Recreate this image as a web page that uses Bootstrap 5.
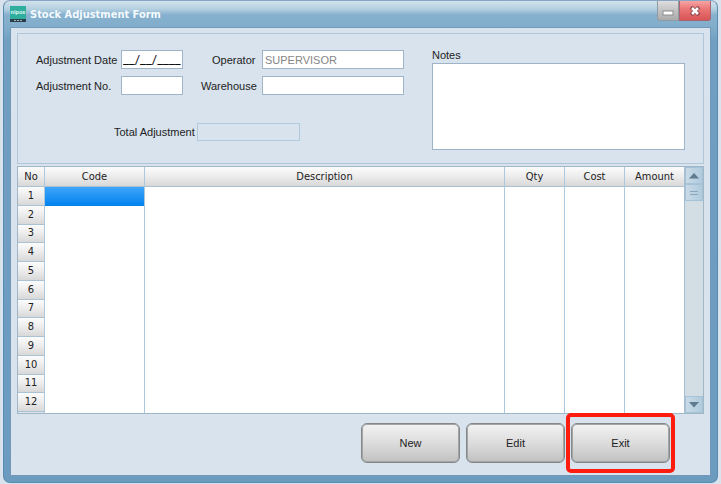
<!DOCTYPE html>
<html lang="en">
<head>
<meta charset="utf-8">
<meta name="viewport" content="width=device-width, initial-scale=1">
<title>Stock Adjustment Form</title>
<link href="https://cdn.jsdelivr.net/npm/bootstrap@5.3.0/dist/css/bootstrap.min.css" rel="stylesheet">
<style>
  body { background: #d8e3ed; color: #222; font-family: "Liberation Sans", sans-serif; font-size: 11px; line-height: 16px; }
  .page { padding: 0 3px 2px; }
  .app-window { border: 1px solid #5a8bb0; border-top-color: #88a5c3; border-radius: 7px; background: linear-gradient(#d3e2ed, #b4d0e1 8px, #86b0ce 14px, #82aecb 26px, #719fc2 40px, #6b9bbf); padding: 0 6px 6px; }
  .title-bar { height: 26px; }
  .title-bar h1 { font: bold 11px/20px "DejaVu Sans Condensed", "Noto Sans", sans-serif; color: #f4fafd; }
  .app-icon { width: 16px; height: 17px; }
  .win-btn { height: 20px; border: 1px solid #8e9ba5; border-top: 0; padding: 0; }
  .btn-min { width: 22px; background: linear-gradient(#dedede, #c5c5c5 45%, #ababab); border-radius: 0 0 0 3px; }
  .btn-close-win { width: 32px; background: linear-gradient(#f7a4a4, #ea7373 45%, #d95556); border-color: #a96572; border-radius: 0 0 3px 0; }
  .work-area { background: #d8e3ed; border: 1px solid #7398b9; padding: 5px 6px 12px; }
  .form-panel { border: 1px solid #afc7d8; padding: 11px 18px 13px; margin-bottom: 2px; gap: 28px; }
  .form-panel label { white-space: nowrap; }
  .field-grid { display: grid; grid-template-columns: 85px 62px 79px 142px; row-gap: 7px; align-items: center; margin-top: 5px; }
  .field-grid .right-label { padding-left: 18px; }
  .field-grid .operator-label { padding-left: 29px; }
  .field { height: 19px; border: 1px solid #9fb5c7; border-radius: 0; background: #fff; padding: 0 2px; width: 100%; color: #111; font-size: 11px; line-height: 16px; }
  .field:disabled { color: #858585; opacity: 1; }
  #adj-date { font-family: Roboto, sans-serif; font-size: 13px; padding: 0 1px; }
  .total-row { margin-top: 28px; }
  .total-row label { width: 161px; padding-left: 78px; }
  .total-row .field { width: 103px; height: 18px; background: #d8e3ed; border-color: #afc9dd; }
  .notes-col { padding-top: 2px; }
  .notes-field { height: 87px; resize: none; display: block; }
  .grid-box { border: 1px solid #a0b7c7; background: #fff; }
  .grid-box table { height: 246px; table-layout: fixed; border-collapse: separate; border-spacing: 0; font: 11px/14px "DejaVu Sans Condensed", "Noto Sans", sans-serif; color: #222; }
  .grid-box th { font-weight: 400; text-align: center; padding: 0; border-right: 1px solid #aac8de; border-bottom: 1px solid #abc2d2; background: linear-gradient(#fcfcfc, #ececec 50%, #d8d8d8); }
  .grid-box thead th { height: 20px; }
  .grid-box td { padding: 0; border-right: 1px solid #aac8de; }
  .grid-box tr > :last-child { border-right-color: #a5bfd1; }
  .grid-box td.selected-cell { background: linear-gradient(#3fa5fa, #0082ee); }
  .grid-box tfoot td { height: 1px; }
  .grid-box tfoot td:first-child { background: #d8e3ed; }
  .col-no { width: 27px; } .col-code { width: 100px; } .col-num { width: 60px; }
  .scroll-bar { width: 18px; background: #d3dee4; }
  .scroll-bar button { height: 17px; border: 1px solid #a6c2d6; background: linear-gradient(90deg, #c8dae7, #b0cadd); padding: 0; }
  .actions { gap: 6px; padding: 9px 34px 0 0; }
  .action-btn { width: 99px; height: 40px; border: 1px solid #858789; border-radius: 6px; background: linear-gradient(#f3f3f3, #dcdcdc 50%, #c1c1c1); box-shadow: inset 0 0 0 1px #a2a4a6; font-size: 11px; color: #222; padding: 0; }
  .marked { position: relative; }
  .marked::after { content: ""; position: absolute; inset: -11px -6px; border: 4px solid #fe1c0e; border-radius: 5px; pointer-events: none; }
</style>
<script src="https://cdn.jsdelivr.net/npm/bootstrap@5.3.0/dist/js/bootstrap.bundle.min.js"></script>
</head>
<body>
<div class="page">
<main class="app-window">
  <header class="title-bar d-flex align-items-start">
    <svg class="app-icon mt-1" viewBox="0 0 16 17" aria-hidden="true">
      <rect width="16" height="13" y="1" fill="#2fae9d"/><rect width="16" height="3" y="14" fill="#2b3e4b"/>
      <text x="8" y="9" font-family="Roboto, sans-serif" font-size="6" font-weight="700" fill="#d8f3ee" text-anchor="middle">nipos</text>
      <path d="M4 15.500h8" stroke="#aebbc2" stroke-dasharray="2 1"/>
    </svg>
    <h1 class="mb-0 ms-1 mt-1 flex-grow-1">Stock Adjustment Form</h1>
    <button type="button" class="win-btn btn-min d-flex align-items-center justify-content-center" aria-label="Minimize">
      <svg width="12" height="10" viewBox="0 0 12 10"><rect x="1" y="5" width="10" height="4" fill="#fff" stroke="#8c8c8c"/></svg>
    </button>
    <button type="button" class="win-btn btn-close-win d-flex align-items-center justify-content-center" aria-label="Close">
      <svg width="12" height="10" viewBox="0 0 12 10"><path d="M2 1l8 8M10 1L2 9" stroke="#8f4a50" stroke-width="4"/><path d="M3 2l6 6M9 2L3 8" stroke="#fff" stroke-width="2.500"/></svg>
    </button>
  </header>
  <div class="work-area">
    <form class="form-panel d-flex">
      <div class="flex-shrink-0">
        <div class="field-grid">
          <label for="adj-date">Adjustment Date</label>
          <input id="adj-date" class="field" type="text" value="__/__/____">
          <label for="operator" class="operator-label">Operator</label>
          <input id="operator" class="field" type="text" value="SUPERVISOR" disabled>
          <label for="adj-no">Adjustment No.</label>
          <input id="adj-no" class="field" type="text">
          <label for="warehouse" class="right-label">Warehouse</label>
          <input id="warehouse" class="field" type="text">
        </div>
        <div class="total-row d-flex align-items-center">
          <label for="total">Total Adjustment</label>
          <input id="total" class="field" type="text" readonly>
        </div>
      </div>
      <div class="notes-col flex-grow-1">
        <label for="notes" class="d-block">Notes</label>
        <textarea id="notes" class="field notes-field"></textarea>
      </div>
    </form>
    <div class="grid-box d-flex">
      <table class="flex-grow-1 w-100">
        <colgroup><col class="col-no"><col class="col-code"><col><col class="col-num"><col class="col-num"><col class="col-num"></colgroup>
        <thead><tr><th scope="col">No</th><th scope="col">Code</th><th scope="col">Description</th><th scope="col">Qty</th><th scope="col">Cost</th><th scope="col">Amount</th></tr></thead>
        <tbody>
          <tr><th scope="row">1</th><td class="selected-cell"></td><td></td><td></td><td></td><td></td></tr>
          <tr><th scope="row">2</th><td></td><td></td><td></td><td></td><td></td></tr>
          <tr><th scope="row">3</th><td></td><td></td><td></td><td></td><td></td></tr>
          <tr><th scope="row">4</th><td></td><td></td><td></td><td></td><td></td></tr>
          <tr><th scope="row">5</th><td></td><td></td><td></td><td></td><td></td></tr>
          <tr><th scope="row">6</th><td></td><td></td><td></td><td></td><td></td></tr>
          <tr><th scope="row">7</th><td></td><td></td><td></td><td></td><td></td></tr>
          <tr><th scope="row">8</th><td></td><td></td><td></td><td></td><td></td></tr>
          <tr><th scope="row">9</th><td></td><td></td><td></td><td></td><td></td></tr>
          <tr><th scope="row">10</th><td></td><td></td><td></td><td></td><td></td></tr>
          <tr><th scope="row">11</th><td></td><td></td><td></td><td></td><td></td></tr>
          <tr><th scope="row">12</th><td></td><td></td><td></td><td></td><td></td></tr>
        </tbody>
        <tfoot aria-hidden="true"><tr><td></td><td></td><td></td><td></td><td></td><td></td></tr></tfoot>
      </table>
      <div class="scroll-bar d-flex flex-column flex-shrink-0">
        <button type="button" class="d-flex align-items-center justify-content-center" aria-label="Scroll up"><svg width="10" height="6"><path d="M0 5.500L5 0l5 5.500z" fill="#5f7b90"/></svg></button>
        <button type="button" class="d-flex align-items-center justify-content-center" aria-label="Scroll position"><svg width="8" height="6"><path d="M0 1.500h8M0 4.500h8" stroke="#8ba6b9"/></svg></button>
        <button type="button" class="d-flex align-items-center justify-content-center mt-auto" aria-label="Scroll down"><svg width="10" height="6"><path d="M0 0h10L5 5.500z" fill="#5f7b90"/></svg></button>
      </div>
    </div>
    <div class="actions d-flex justify-content-end">
      <button type="button" class="action-btn">New</button>
      <button type="button" class="action-btn">Edit</button>
      <button type="button" class="action-btn marked">Exit</button>
    </div>
  </div>
</main>
</div>
</body>
</html>
